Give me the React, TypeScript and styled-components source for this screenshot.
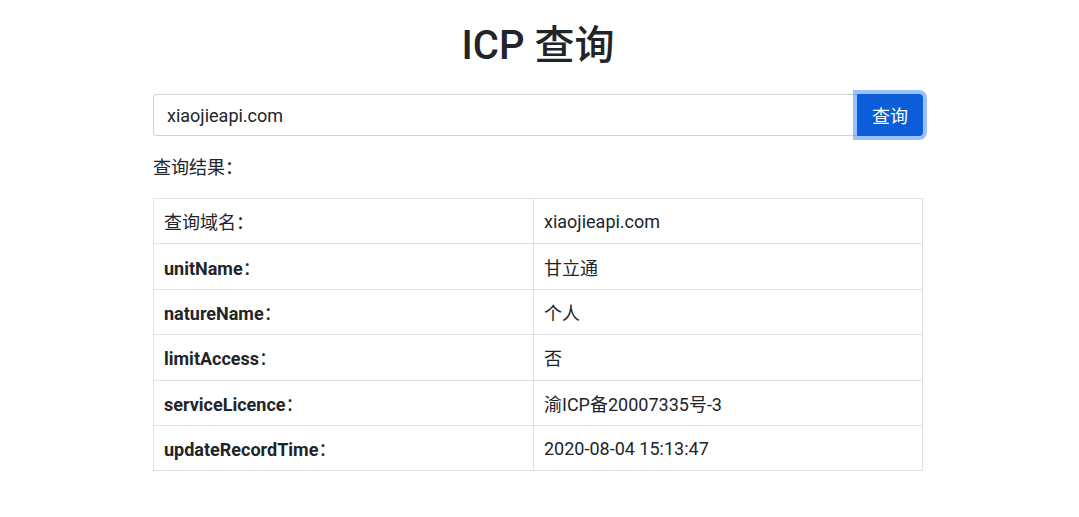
import React from 'react'
import styled, { createGlobalStyle } from 'styled-components';

const GlobalStyle = createGlobalStyle`
    body {
        margin: 0;
        background: #fff;
        color: #212529;
        font-family: Roboto, "Noto Sans CJK SC", sans-serif;
    }
`;

const Page = styled.div`
    padding: 18px 3px 0 0;
`;
const Container = styled.div`
    width: 770px;
    margin: 0 auto;
`;
const Title = styled.h1`
    margin: 0 0 20px;
    text-align: center;
    font-size: 40px;
    font-weight: 500;
    line-height: 56px;
`;
const SearchGroup = styled.div`
    display: flex;
    height: 42px;
`;
const Input = styled.input`
    flex: 1;
    box-sizing: border-box;
    height: 42px;
    border: 1px solid #ced4da;
    border-right: none;
    border-radius: 4px 0 0 4px;
    padding: 0 13px;
    font-family: inherit;
    font-size: 18px;
    color: #212529;
    outline: none;
`;
const Button = styled.button`
    width: 66px;
    height: 42px;
    border: none;
    border-radius: 0 4px 4px 0;
    background: #0b5ed7;
    color: #fff;
    font-family: inherit;
    font-size: 18px;
    box-shadow: 0 0 0 4px rgba(49, 132, 253, 0.5);
    position: relative;
    z-index: 1;
`;
const ResultLabel = styled.p`
    margin: 20px 0 18px;
    font-size: 18px;
    line-height: 24px;
`;
const Table = styled.table`
    width: 100%;
    table-layout: fixed;
    border-collapse: collapse;
    font-size: 18px;
`;
const Cell = styled.td<{ $bold?: boolean }>`
    border: 1px solid #dee2e6;
    height: 44.4px;
    padding: 0 10px;
    font-weight: ${p => (p.$bold ? 700 : 400)};
    &:first-child {
        width: 359px;
    }
`;
const Colon = styled.span`
    font-weight: 400;
`;

const rows: [string, string, boolean][] = [
    ['查询域名', 'xiaojieapi.com', false],
    ['unitName', '甘立通', true],
    ['natureName', '个人', true],
    ['limitAccess', '否', true],
    ['serviceLicence', '渝ICP备20007335号-3', true],
    ['updateRecordTime', '2020-08-04 15:13:47', true],
];

const App: React.FC = () => {
    return (
        <>
            <GlobalStyle />
            <Page>
                <Container>
                    <Title>ICP 查询</Title>
                    <SearchGroup>
                        <Input defaultValue="xiaojieapi.com" />
                        <Button>查询</Button>
                    </SearchGroup>
                    <ResultLabel>查询结果：</ResultLabel>
                    <Table>
                        <tbody>
                            {rows.map(([k, v, b]) => (
                                <tr key={k}>
                                    <Cell $bold={b}>{k}<Colon>：</Colon></Cell>
                                    <Cell>{v}</Cell>
                                </tr>
                            ))}
                        </tbody>
                    </Table>
                </Container>
            </Page>
        </>
    )
}

export default App
